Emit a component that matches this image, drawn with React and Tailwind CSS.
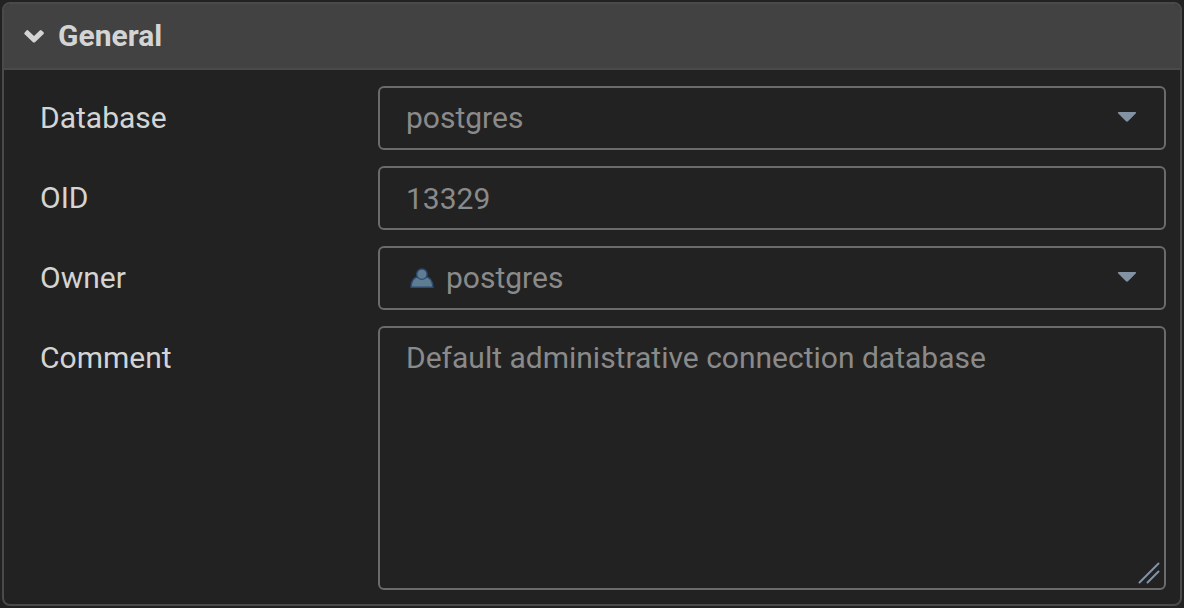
import { useState } from "react";

const fieldClass =
  "block w-full rounded-md border-2 border-[#6b6b6b] bg-[#222222] px-[26px] text-[30px] leading-9 text-[#8a8a8a] outline-none";

function Row({ id, label, children }) {
  return (
    <div className="flex items-start">
      <label htmlFor={id} className="w-[338px] shrink-0 py-[14px] text-[30px] leading-9 text-[#d4d4d4]">
        {label}
      </label>
      <div className="relative min-w-0 flex-1">{children}</div>
    </div>
  );
}

function DropArrow() {
  return (
    <svg
      className="pointer-events-none absolute top-[24px] right-[29px] h-3 w-5"
      viewBox="0 0 20 12"
      fill="#8392a5"
      aria-hidden="true"
    >
      <path d="M1.9 2H18.1Q19.8 2 18.7 3.5L11 11.3Q10 12.2 9 11.3L1.3 3.5Q0.2 2 1.9 2Z" />
    </svg>
  );
}

function UserIcon() {
  return (
    <svg
      className="pointer-events-none absolute top-[20px] left-[30px] h-6 w-7"
      viewBox="0 0 28 24"
      fill="#5f7d90"
      stroke="#2b4b78"
      strokeWidth="1.4"
      aria-hidden="true"
    >
      <path d="M3 21.2C3.2 15.5 6 11.5 10 10.8H18C22 11.5 24.6 15.5 25 21.2Z" strokeLinejoin="round" />
      <circle cx="13.9" cy="8.2" r="5.2" />
    </svg>
  );
}

export default function App() {
  const [open, setOpen] = useState(true);

  return (
    <main className="min-h-screen bg-[#222222] p-0.5 font-['Roboto',sans-serif]">
      <section className="overflow-hidden rounded-lg border-2 border-[#4a4a4a] bg-[#222222]">
        <h2 className="border-b-2 border-[#4a4a4a] bg-[#424242]">
          <button
            type="button"
            aria-expanded={open}
            onClick={() => setOpen(!open)}
            className="flex h-16 w-full items-center gap-3 px-[18px] text-left text-[30px] leading-9 font-bold text-[#d4d4d4]"
          >
            <svg className="h-6 w-6" viewBox="0 0 24 24" fill="currentColor" aria-hidden="true">
              <path d="M2.4 9.1L4.4 6.4Q5.3 5.6 6.2 6.4L12 12L17.8 6.4Q18.7 5.6 19.6 6.4L21.6 8.3Q22.3 9.1 21.6 9.9L13 18.2Q12 19 11 18.2L2.4 9.9Q2 9.5 2.4 9.1Z" />
            </svg>
            General
          </button>
        </h2>
        {open && (
          <form className="flex flex-col gap-4 pt-4 pr-[14px] pb-[14px] pl-9">
            <Row id="database" label="Database">
              <select id="database" disabled className={`${fieldClass} h-16 appearance-none disabled:opacity-100`}>
                <option>postgres</option>
              </select>
              <DropArrow />
            </Row>
            <Row id="oid" label="OID">
              <input id="oid" type="text" readOnly value="13329" className={`${fieldClass} h-16`} />
            </Row>
            <Row id="owner" label="Owner">
              <select
                id="owner"
                disabled
                className={`${fieldClass} h-16 appearance-none pl-[66px]! disabled:opacity-100`}
              >
                <option>postgres</option>
              </select>
              <UserIcon />
              <DropArrow />
            </Row>
            <Row id="comment" label="Comment">
              <textarea
                id="comment"
                readOnly
                value="Default administrative connection database"
                className={`${fieldClass} h-[264px] resize-none py-3`}
              />
              <svg
                className="pointer-events-none absolute right-1 bottom-1 h-6 w-6"
                viewBox="0 0 24 24"
                stroke="#8392a5"
                strokeWidth="2"
                strokeLinecap="round"
                aria-hidden="true"
              >
                <path d="M1.5 20.5L20.5 1.5M9.5 20.5L20.5 9.5" />
              </svg>
            </Row>
          </form>
        )}
      </section>
    </main>
  );
}
